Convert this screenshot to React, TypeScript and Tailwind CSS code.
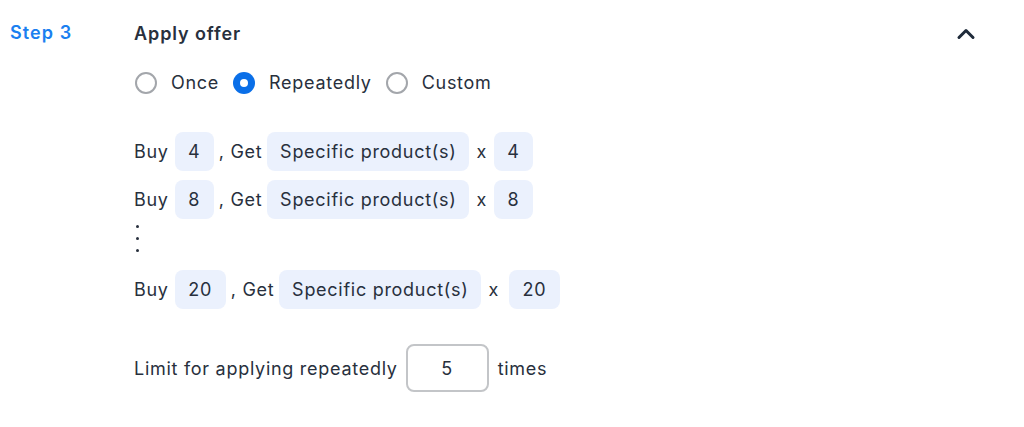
import { useState } from "react";
import { ChevronUp } from "lucide-react";

type Mode = "once" | "repeatedly" | "custom";

function Chip({ children, className = "" }: { children: React.ReactNode; className?: string }) {
  return (
    <span className={`inline-flex h-[39px] items-center justify-center rounded-lg bg-[#ebf1fd] ${className}`}>
      {children}
    </span>
  );
}

function Radio({ checked, label, onClick }: { checked: boolean; label: string; onClick: () => void }) {
  return (
    <button type="button" onClick={onClick} className="flex items-center gap-[14px] tracking-[0.04em]">
      {checked ? (
        <span className="flex h-[22px] w-[22px] items-center justify-center rounded-full bg-[#0a6fe8]">
          <span className="h-[8px] w-[8px] rounded-full bg-white" />
        </span>
      ) : (
        <span className="h-[22px] w-[22px] rounded-full border-2 border-[#a3a6ab]" />
      )}
      <span>{label}</span>
    </button>
  );
}

const rows = [
  { buy: "4", qty: "4" },
  { buy: "8", qty: "8" },
];

export default function App() {
  const [mode, setMode] = useState<Mode>("repeatedly");

  return (
    <div className="flex h-[427px] w-[1024px] bg-white pl-[10px] pr-[44px] pt-[20px] font-['Inter',sans-serif] text-[18px] tracking-[0.04em] text-[#28303d]">
      <div className="w-[124px] text-[18px] font-semibold leading-[26px] tracking-[0.06em] text-[#1a80f0]">Step 3</div>
      <div className="flex-1">
        <div className="flex items-center justify-between">
          <h3 className="text-[18px] font-semibold leading-[26px] tracking-[0.05em]">Apply offer</h3>
          <ChevronUp className="h-7 w-7 text-[#1f2b3a]" strokeWidth={2.6} />
        </div>

        <div className="mt-[21px] flex items-center gap-[14px] pl-px">
          <Radio checked={mode === "once"} label="Once" onClick={() => setMode("once")} />
          <Radio checked={mode === "repeatedly"} label="Repeatedly" onClick={() => setMode("repeatedly")} />
          <Radio checked={mode === "custom"} label="Custom" onClick={() => setMode("custom")} />
        </div>

        <div className="mt-[36px] flex flex-col gap-[9px]">
          {rows.map((r) => (
            <div key={r.buy} className="flex items-center">
              <span>Buy</span>
              <Chip className="ml-[6px] w-[39px]">{r.buy}</Chip>
              <span className="ml-[5px]">, Get</span>
              <Chip className="ml-[5px] w-[202px]">Specific product(s)</Chip>
              <span className="ml-[7px]">x</span>
              <Chip className="ml-[7px] w-[39px]">{r.qty}</Chip>
            </div>
          ))}
        </div>

        <div className="ml-[2px] mt-[4px] flex flex-col gap-[9px] py-[2px]">
          <span className="h-[3px] w-[3px] rounded-full bg-[#28303d]" />
          <span className="h-[3px] w-[3px] rounded-full bg-[#28303d]" />
          <span className="h-[3px] w-[3px] rounded-full bg-[#28303d]" />
        </div>

        <div className="mt-[16px] flex items-center">
          <span>Buy</span>
          <Chip className="ml-[6px] w-[51px]">20</Chip>
          <span className="ml-[5px]">, Get</span>
          <Chip className="ml-[5px] w-[202px]">Specific product(s)</Chip>
          <span className="ml-[7px]">x</span>
          <Chip className="ml-[10px] w-[51px]">20</Chip>
        </div>

        <div className="mt-[35px] flex items-center">
          <span>Limit for applying repeatedly</span>
          <input
            defaultValue="5"
            className="ml-[8px] h-[48px] w-[83px] rounded-lg border-2 border-[#c3c5c8] bg-white text-center text-[18px] text-[#28303d] outline-none"
          />
          <span className="ml-[9px]">times</span>
        </div>
      </div>
    </div>
  );
}
